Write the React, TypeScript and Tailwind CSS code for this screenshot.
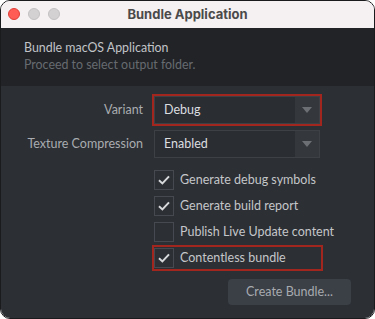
import React from 'react'

const font = { fontFamily: 'Lato, "Open Sans", sans-serif' }

function Select({ value, highlighted }: { value: string; highlighted?: boolean }) {
  return (
    <div
      className={`w-[170px] border-2 ${highlighted ? 'border-[#a3261e]' : 'border-transparent'}`}
    >
      <div className="flex h-[28px] border border-[#3d4045] bg-[#2a2d31]">
        <div className="flex flex-1 items-center pl-[9px] text-[12.5px] text-[#dcdee0]">{value}</div>
        <div className="flex w-[24px] items-center justify-center bg-[#34373c]">
          <svg width="10" height="6" viewBox="0 0 10 6">
            <path d="M0 0 L10 0 L5 6 Z" fill="#6c7075" />
          </svg>
        </div>
      </div>
    </div>
  )
}

function Check({ label, checked, highlighted }: { label: string; checked: boolean; highlighted?: boolean }) {
  return (
    <div
      className={`flex h-[26px] w-[171px] items-center border-2 ${highlighted ? 'border-[#a3261e]' : 'border-transparent'}`}
    >
      <div className="flex h-[20px] w-[20px] shrink-0 items-center justify-center border border-[#46494f] bg-[#2c2f34]">
        {checked && (
          <svg width="12" height="10" viewBox="0 0 12 10">
            <path d="M1 5.2 L4.4 8.4 L11 1.4" fill="none" stroke="#d6d8da" strokeWidth="2" />
          </svg>
        )}
      </div>
      <span className="ml-[6px] whitespace-nowrap text-[12.5px] text-[#c4c6c9]">{label}</span>
    </div>
  )
}

export default function App() {
  return (
    <div className="h-[319px] w-[375px] bg-white" style={font}>
      <div className="flex h-full flex-col overflow-hidden rounded-[10px] border border-[#1a1b1d]">
        <div className="relative flex h-[27px] items-center justify-center bg-[#f5f0f1]">
          <div className="absolute left-[7px] top-[7px] flex gap-[8px]">
            <div className="h-[12px] w-[12px] rounded-full border border-[#df3d36] bg-[#fe5c55]" />
            <div className="h-[12px] w-[12px] rounded-full border border-[#c3c1c2] bg-[#d3d1d2]" />
            <div className="h-[12px] w-[12px] rounded-full border border-[#c3c1c2] bg-[#d3d1d2]" />
          </div>
          <span className="text-[13px] font-bold text-[#4b4a4b]" style={{ fontFamily: 'Inter, sans-serif' }}>
            Bundle Application
          </span>
        </div>
        <div className="h-[58px] bg-[#212327] pl-[23px] pt-[11px]">
          <div className="whitespace-nowrap text-[12.4px] leading-[17px] text-[#c2c4c7]">Bundle macOS Application</div>
          <div className="whitespace-nowrap text-[12.4px] leading-[17px] text-[#676b70]">Proceed to select output folder.</div>
        </div>
        <div className="flex flex-1 flex-col bg-[#2c2f34] pt-[8px]">
          <div className="flex items-center">
            <div className="w-[151px] whitespace-nowrap pr-[9px] text-right text-[12.5px] text-[#a9acb0]">Variant</div>
            <Select value="Debug" highlighted />
          </div>
          <div className="mt-[2px] flex items-center">
            <div className="w-[151px] whitespace-nowrap pr-[9px] text-right text-[12.5px] text-[#a9acb0]">Texture Compression</div>
            <Select value="Enabled" />
          </div>
          <div className="ml-[151px] mt-[7px] flex flex-col">
            <Check label="Generate debug symbols" checked />
            <Check label="Generate build report" checked />
            <Check label="Publish Live Update content" checked={false} />
            <Check label="Contentless bundle" checked highlighted />
          </div>
          <div className="mt-[8px] flex justify-end pr-[23px]">
            <button className="h-[26px] w-[123px] rounded-[4px] bg-[#3b3f46] text-[12.5px] text-[#a7abb0]">
              Create Bundle...
            </button>
          </div>
        </div>
      </div>
    </div>
  )
}
